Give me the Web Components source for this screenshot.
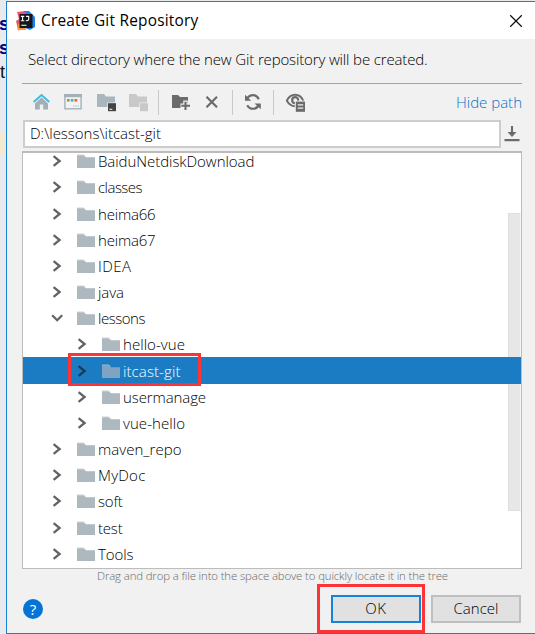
<!DOCTYPE html>
<html lang="en">
<head>
<meta charset="utf-8">
<title>Create Git Repository</title>
<style>
html,body{margin:0;height:100%;overflow:hidden}
body{background:#e9eaed;font-family:"Open Sans","Noto Sans",sans-serif;font-weight:300;color:#000}
</style>
</head>
<body>
<git-window></git-window>
<script>
const define = (name, html, setup) => customElements.define(name, class extends HTMLElement {
  connectedCallback() {
    if (this.shadowRoot) return;
    const t = document.createElement('template');
    t.innerHTML = html;
    this.attachShadow({mode: 'open'}).append(t.content.cloneNode(true));
    if (setup) setup(this, this.shadowRoot);
  }
});

// Text line whose tracking is adjusted to a given advance width.
define('fit-text', `<style>:host{display:block;white-space:pre}span{display:inline-block}</style><span></span>`, (el, root) => {
  const s = root.querySelector('span');
  s.textContent = el.getAttribute('text');
  const w = +el.getAttribute('w');
  const natural = s.getBoundingClientRect().width;
  if (w && natural) s.style.letterSpacing = ((w - natural) / s.textContent.length) + 'px';
});

const icons = {
  logo: [20, 20, `<path d="M1 1L9 0L7 12L2 20L1 14L0 10L3 8Z" fill="#f0526c"/><path d="M2 13L8 13L10 19L2 19Z" fill="#f8933e"/><path d="M8 0L13 0L19 6L19 16L14 19L9 17Z" fill="#1c83ec"/><path d="M7 1L11 1L9 4L6 4Z" fill="#a865ca"/><rect x="3.5" y="3" width="13" height="14" fill="#17151a"/><path d="M4.9 5.4H8.3M6.6 5.4V9.8M4.9 9.8H8.3M10 5.4H12.7V8.6Q12.4 9.9 9.8 9.8M5.3 14.3H10.5" fill="none" stroke="#fff" stroke-width="1.1"/>`],
  close: [12, 12, `<path d="M.2 .2L11.8 11.8M11.8 .2L.2 11.8" stroke="#111" stroke-width="1.25" fill="none"/>`],
  home: [18, 18, `<path d="M8.5 4.5L15 10.5V16.5H10.2V11.5H6.8V16.5H2V10.5Z" fill="#a3afb7"/><path d="M.7 9L8.5 2L16.3 9" fill="none" stroke="#45b8e3" stroke-width="2"/>`],
  desktop: [18, 18, `<rect x=".9" y="2.2" width="16.2" height="13.6" fill="#f2f2f2" stroke="#a5b1b9" stroke-width="1.4"/><rect x="0" y="1" width="18" height="3.2" fill="#a5b1b9"/><rect x="3" y="6" width="2.6" height="2.6" fill="#62b543"/><rect x="6.8" y="6" width="2.6" height="2.6" fill="#35b1df"/><rect x="10.5" y="6" width="2.8" height="2.6" fill="#f26522"/><path d="M9 13H15.5" stroke="#a5b1b9" stroke-dasharray="1.2 1"/>`],
  project: [20, 20, `<path d="M0 2H7L9 4.5H18V15H0Z" fill="#aab6bd"/><rect x="10.3" y="10.5" width="9" height="9" fill="#efefef"/><rect x="11" y="11.2" width="8" height="8" fill="#444"/><path d="M12.3 17.3H15.3" stroke="#ddd" stroke-width="1.2"/>`],
  module: [20, 20, `<path d="M0 2H7L9 4.5H18V15H0Z" fill="#c9c9c9"/><rect x="10.3" y="10.5" width="9" height="9" fill="#f0f0f0"/><rect x="11" y="11.2" width="8" height="8" fill="#c9c9c9"/>`],
  add: [20, 20, `<path d="M0 3H6L8 5.1H16V16H0Z" fill="#6b6b6b"/><path d="M13.5 8.5V18.5M8.5 13.7H18.5" stroke="#f1f1f1" stroke-width="4.5"/><path d="M13.5 9.7V18M9.3 13.8H18" stroke="#6b6b6b" stroke-width="2.1"/>`],
  del: [14, 14, `<path d="M1.5 1.8L12 12.3M12 1.8L1.5 12.3" stroke="#6b6b6b" stroke-width="2.2" fill="none"/>`],
  refresh: [18, 18, `<path d="M3 5.8Q5.2 2.1 9 2.1Q12.8 2.1 14.8 6.3M15 11.5Q13.2 15.8 9 15.8Q5.1 15.8 3.2 12.2" fill="none" stroke="#6b6b6b" stroke-width="2.1"/><path d="M1 1.8V7.8H7.2ZM16.8 10.4H10.5L16.8 16.3Z" fill="#6b6b6b"/>`],
  eye: [20, 20, `<g transform="translate(-1 .6)"><path d="M.8 8Q3.8 2.2 9.2 2.2Q14.5 2.2 17.2 8Q14.5 13.6 9.2 13.6Q3.8 13.6 .8 8Z" fill="none" stroke="#6b6b6b" stroke-width="2"/><circle cx="9.2" cy="7.6" r="3" fill="none" stroke="#6b6b6b" stroke-width="2.2"/><rect x="8.8" y="8" width="10.7" height="12" fill="#f1f1f1"/><rect x="9.8" y="9" width="9.2" height="10.2" fill="#6b6b6b"/><path d="M11.8 12.3H17.2M11.8 15.5H17.2" stroke="#eee" stroke-width="1.2"/></g>`],
  download: [16, 16, `<path d="M8 0V8" stroke="#6b6b6b" stroke-width="2.1"/><path d="M3.5 6H12.5L8 11Z" fill="#6b6b6b"/><rect x=".5" y="13" width="15" height="2.2" fill="#6b6b6b"/>`],
  folder: [18, 14, `<path d="M0 .4H6.5L9.2 2.6H8V4H0Z" fill="#ccd4d9"/><path d="M0 1.4H6.2L9 3.2H18V14H0Z" fill="#adb8bf"/>`],
  right: [12, 12, `<path d="M2.6 1.1L8.6 6L2.6 10.9" fill="none" stroke="#636363" stroke-width="2.3"/>`],
  down: [12, 12, `<path d="M1.2 3.3L6.2 8.2L11.2 3.3" fill="none" stroke="#636363" stroke-width="2.3"/>`]
};
define('ui-icon', `<style>:host{display:block;flex:none}svg{display:block;overflow:visible}</style><div></div>`, (el, root) => {
  const [w, h, body] = icons[el.getAttribute('name')];
  root.querySelector('div').innerHTML = `<svg width="${w}" height="${h}" viewBox="0 0 ${w} ${h}">${body}</svg>`;
});

define('title-bar', `<style>
:host{display:flex;width:528px;height:37px;background:#fff;align-items:center;padding:0 13px 0 9px;font-weight:400;font-size:15.4px;line-height:22px;box-sizing:border-box}
fit-text{flex:1;margin-left:5px;margin-top:1px}
</style><ui-icon name="logo"></ui-icon><fit-text text="Create Git Repository" w="157.5"></fit-text><ui-icon name="close"></ui-icon>`);

define('tool-bar', `<style>
:host{display:flex;height:36px;align-items:center;font-size:15px;line-height:22px}
i{width:1px;height:25px;background:#c9c9c9;flex:none}
fit-text{margin-left:auto;color:#0870c8;margin-top:-1px}
</style>
<ui-icon name="home" style="margin-left:10.5px"></ui-icon><ui-icon name="desktop" style="margin-left:13.5px"></ui-icon>
<ui-icon name="project" style="margin-left:15px"></ui-icon><ui-icon name="module" style="margin-left:12px"></ui-icon>
<i style="margin-left:9px"></i><ui-icon name="add" style="margin-left:13px"></ui-icon><ui-icon name="del" style="margin-left:12.5px"></ui-icon>
<i style="margin-left:13px"></i><ui-icon name="refresh" style="margin-left:11.5px"></ui-icon>
<i style="margin-left:11px"></i><ui-icon name="eye" style="margin-left:12.5px"></ui-icon>
<fit-text text="Hide path" w="66"></fit-text>`);

define('path-field', `<style>
:host{display:flex;align-items:center;height:28px;padding-left:1px;font-size:15px}
div{width:478px;height:28px;box-sizing:border-box;border:2px solid #cdcdcd;background:#fff;padding:0 0 0 5px;line-height:23px}
ui-icon{margin-left:3px}
</style><div><fit-text text="D:\\lessons\\itcast-git" w="131"></fit-text></div><ui-icon name="download"></ui-icon>`);

define('tree-row', `<style>
:host{display:flex;flex:none;height:26.18px;align-items:center;font-size:15px;line-height:26px;box-sizing:border-box;padding-left:28px}
:host([child]){padding-left:53px}
:host([selected]){background:#1b7cc4;color:#fff}
:host([selected]) .a{filter:brightness(.45) sepia(1) hue-rotate(165deg) saturate(3)}
:host([selected]) .f{opacity:.68}
.a{margin-right:14px}.f{margin-right:3px}
</style>`, (el, root) => {
  const add = (tag, attrs) => {
    const n = document.createElement(tag);
    for (const k in attrs) n.setAttribute(k, attrs[k]);
    root.append(n);
  };
  add('ui-icon', {name: el.hasAttribute('open') ? 'down' : 'right', class: 'a'});
  add('ui-icon', {name: 'folder', class: 'f'});
  add('fit-text', {text: el.getAttribute('label'), w: el.getAttribute('w')});
});

define('file-tree', `<style>
:host{display:block;position:relative;height:418px;box-sizing:border-box;border:1px solid #bcbcbc;border-top:2px solid #bcbcbc;background:#fff;overflow:hidden}
#rows{position:relative;z-index:1;display:flex;flex-direction:column;margin-top:-4.9px}
#bar{position:absolute;right:0;top:60px;width:13px;height:298px;background:#e7e7e7;border:1px solid #dedede;border-right-color:#f5f5f5;box-sizing:border-box}
</style><div id="rows"></div><div id="bar"></div>`, (el, root) => {
  const data = [['BaiduNetdiskDownload',156.3],['classes',44],['heima66',57.5],['heima67',57.5],['IDEA',33.5],['java',26],['lessons',47],['hello-vue',62],['itcast-git',57.5],['usermanage',83],['vue-hello',62],['maven_repo',83.5],['MyDoc',47.5],['soft',24.5],['test',24.5],['Tools',35.5]];
  const flags = {'lessons': ['open'], 'hello-vue': ['child'], 'itcast-git': ['child', 'selected'], 'usermanage': ['child'], 'vue-hello': ['child']};
  for (const [label, w] of data) {
    const row = document.createElement('tree-row');
    row.setAttribute('label', label);
    row.setAttribute('w', w);
    (flags[label] || []).forEach(f => row.setAttribute(f, ''));
    root.getElementById('rows').append(row);
  }
});

define('push-button', `<style>
:host{display:flex;align-items:center;justify-content:center;width:90px;height:28px;box-sizing:border-box;background:#e1e1e1;border:2px solid #bfbfbf;font-size:15px;line-height:24px}
:host([primary]){border-color:#1583d9}
::slotted(fit-text){margin-top:-2px}
</style><slot></slot>`);

define('help-badge', `<style>:host{display:flex;width:20px;height:20px;border-radius:50%;background:#0674d5;color:#fff;align-items:center;justify-content:center;font-size:15px;line-height:20px;font-weight:400;margin-left:1px}</style><slot></slot>`);

define('mark-box', `<style>:host{position:absolute;box-sizing:border-box;border:3px solid #fb3537;pointer-events:none;z-index:2}</style>`);

define('git-window', `<style>
:host{display:flex;position:relative;width:535px;height:634px;overflow:hidden}
aside{width:6px;flex:none;overflow:hidden;background:linear-gradient(#e9eaed 0 132px,#f4ead2 132px 156px,#e9eaed 156px);font:700 18px/24px "Liberation Sans",sans-serif;color:#000080;padding-top:12px;box-sizing:border-box}
aside div{height:24px;margin-left:-1px}
aside div:last-child{color:#111;font-weight:400;margin-left:0}
main{width:560px;flex:none;height:633px;margin-top:1px;border:1px solid #1881d2;box-sizing:border-box;background:#f1f1f1}
title-bar{box-shadow:20px 0 #fff}
.body{width:500px;margin-left:15px}
.desc{font-size:15px;line-height:22px;height:45px;border-bottom:1px solid #a2a2a2;padding:9px 0 0 6px;box-sizing:border-box}
.hint{font-size:11.4px;line-height:14px;color:#6a6a6a;padding-left:75px;height:26px}
file-tree{margin-top:3px}
footer{display:flex;align-items:center;height:28px}
push-button{margin-left:10px}
push-button[primary]{margin-left:auto}
push-button:last-child{margin-right:1px}
</style>
<aside><div>s</div><div>s</div><div>t</div></aside>
<main><title-bar></title-bar><div class="body">
<div class="desc"><fit-text text="Select directory where the new Git repository will be created." w="399.5"></fit-text></div>
<tool-bar></tool-bar><path-field></path-field><file-tree></file-tree>
<div class="hint"><fit-text text="Drag and drop a file into the space above to quickly locate it in the tree" w="351"></fit-text></div>
<footer><help-badge>?</help-badge><push-button primary><fit-text text="OK" w="21.5"></fit-text></push-button><push-button><fit-text text="Cancel" w="45"></fit-text></push-button></footer>
</div></main>
<mark-box style="left:68px;top:353px;width:133px;height:33px"></mark-box>
<mark-box style="left:317px;top:584px;width:108px;height:49px"></mark-box>`);
</script>
</body>
</html>
